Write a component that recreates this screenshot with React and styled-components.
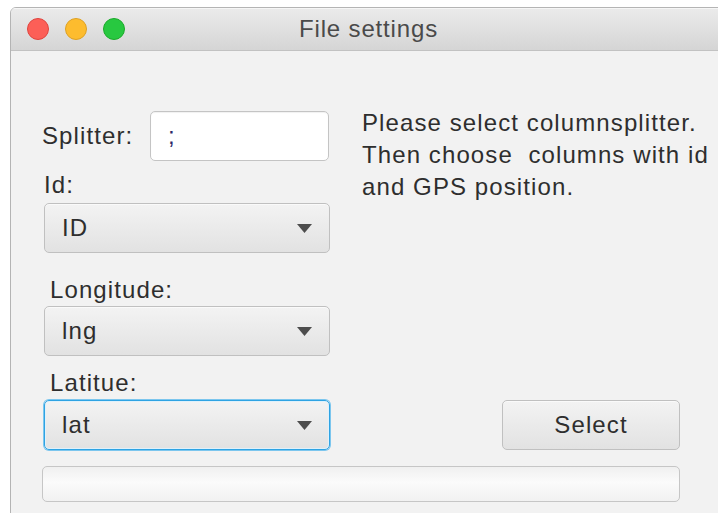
import React from "react";
import styled, { createGlobalStyle } from "styled-components";

const GlobalStyle = createGlobalStyle`
  html, body {
    margin: 0;
    padding: 0;
    background: #ffffff;
    overflow: hidden;
  }
  body {
    font-family: "Liberation Sans", Arial, sans-serif;
  }
`;

const Page = styled.div`
  padding: 7px 0 0 10px;
  width: 718px;
  height: 513px;
  box-sizing: border-box;
  overflow: hidden;
`;

const Window = styled.div`
  width: 715px;
  height: 560px;
  border: 1px solid #b4b4b4;
  border-radius: 6px 6px 0 0;
  background: #f2f2f2;
  overflow: hidden;
  display: flex;
  flex-direction: column;
`;

const TitleBar = styled.div`
  height: 42px;
  flex: none;
  position: relative;
  display: flex;
  align-items: center;
  justify-content: center;
  background: linear-gradient(#ebebeb, #d5d5d5);
  border-bottom: 1px solid #c2c2c2;
  box-shadow: inset 0 1px 0 #f6f6f6;
`;

const Lights = styled.div`
  position: absolute;
  left: 16px;
  top: 0;
  bottom: 0;
  display: flex;
  align-items: center;
  gap: 16px;
`;

const Light = styled.span`
  width: 22px;
  height: 22px;
  border-radius: 50%;
  box-sizing: border-box;
  background: ${(p) => p.$fill};
  border: 1px solid ${(p) => p.$edge};
`;

const Title = styled.div`
  font-size: 24px;
  line-height: 28px;
  letter-spacing: 0.85px;
  color: #4a4a4a;
`;

const Content = styled.div`
  padding: 60px 46px 0 31px;
  display: flex;
  flex-direction: column;
`;

const Form = styled.div`
  display: flex;
`;

const LeftColumn = styled.div`
  width: 288px;
  flex: none;
  display: flex;
  flex-direction: column;
`;

const Row = styled.div`
  display: flex;
  align-items: center;
  justify-content: space-between;
`;

const Text = styled.div`
  font-size: 24px;
  line-height: 28px;
  letter-spacing: 1.1px;
  color: #2e2e2e;
  white-space: nowrap;
`;

const Label = styled(Text)`
  padding: ${(p) => p.$top}px 0 ${(p) => p.$bottom}px ${(p) => p.$indent}px;
`;

const TextField = styled.div`
  width: 179px;
  height: 50px;
  margin-right: 1px;
  box-sizing: border-box;
  background: #ffffff;
  border: 1px solid #c4c4c4;
  border-radius: 5px;
  box-shadow: inset 0 1px 1px rgba(0, 0, 0, 0.06);
  display: flex;
  align-items: center;
  padding-left: 17px;
  font-size: 24px;
  line-height: 28px;
  color: #2a2a6a;
`;

const Combo = styled.div`
  margin-left: 2px;
  height: 50px;
  box-sizing: border-box;
  display: flex;
  align-items: center;
  justify-content: space-between;
  padding: 0 17px 0 17px;
  border-radius: 5px;
  background: linear-gradient(#f3f3f3, #e2e2e2);
  border: 1px solid ${(p) => (p.$focused ? "#2ea3e3" : "#c0c0c0")};
  box-shadow: ${(p) =>
    p.$focused
      ? "0 0 0 1px #7cc6ee, inset 0 0 0 1px #dff1fb"
      : "inset 0 1px 0 #fafafa"};
`;

const Arrow = styled.svg`
  width: 15px;
  height: 9px;
  flex: none;
`;

const RightColumn = styled.div`
  flex: 1;
  min-width: 0;
  display: flex;
  flex-direction: column;
  justify-content: space-between;
  padding-left: 32px;
`;

const HelpText = styled.div`
  margin-top: -4px;
  font-size: 24px;
  line-height: 32px;
  letter-spacing: 1.1px;
  color: #2e2e2e;
  white-space: nowrap;
`;

const Button = styled.button`
  align-self: flex-end;
  width: 178px;
  height: 50px;
  box-sizing: border-box;
  border: 1px solid #c0c0c0;
  border-radius: 5px;
  background: linear-gradient(#f3f3f3, #e2e2e2);
  box-shadow: inset 0 1px 0 #fafafa;
  font-family: "Liberation Sans", Arial, sans-serif;
  font-size: 24px;
  line-height: 28px;
  letter-spacing: 1.1px;
  color: #2e2e2e;
  padding: 0;
`;

const Progress = styled.div`
  margin-top: 16px;
  height: 36px;
  box-sizing: border-box;
  border: 1px solid #c6c6c6;
  border-radius: 5px;
  background: linear-gradient(#f0f0f0, #fbfbfb 45%, #f1f1f1);
`;

const ComboArrow = () => (
  <Arrow viewBox="0 0 15 9">
    <path d="M0 0 H15 L7.5 9 Z" fill="#4d4d4d" />
  </Arrow>
);

const Select = ({ value, focused }) => (
  <Combo $focused={focused}>
    <Text>{value}</Text>
    <ComboArrow />
  </Combo>
);

export default function App() {
  return (
    <>
      <GlobalStyle />
      <Page>
        <Window>
          <TitleBar>
            <Lights>
              <Light $fill="#fc5f57" $edge="#e0443e" />
              <Light $fill="#fdbc2e" $edge="#dea123" />
              <Light $fill="#28c840" $edge="#1aab29" />
            </Lights>
            <Title>File settings</Title>
          </TitleBar>
          <Content>
            <Form>
              <LeftColumn>
                <Row>
                  <Text>Splitter:</Text>
                  <TextField>;</TextField>
                </Row>
                <Label $top={10} $bottom={4} $indent={2}>Id:</Label>
                <Select value="ID" />
                <Label $top={23} $bottom={2} $indent={8}>Longitude:</Label>
                <Select value="lng" />
                <Label $top={13} $bottom={3} $indent={8}>Latitue:</Label>
                <Select value="lat" focused />
              </LeftColumn>
              <RightColumn>
                <HelpText>
                  Please select columnsplitter.
                  <br />
                  Then choose&nbsp; columns with id
                  <br />
                  and GPS position.
                </HelpText>
                <Button>Select</Button>
              </RightColumn>
            </Form>
            <Progress />
          </Content>
        </Window>
      </Page>
    </>
  );
}
